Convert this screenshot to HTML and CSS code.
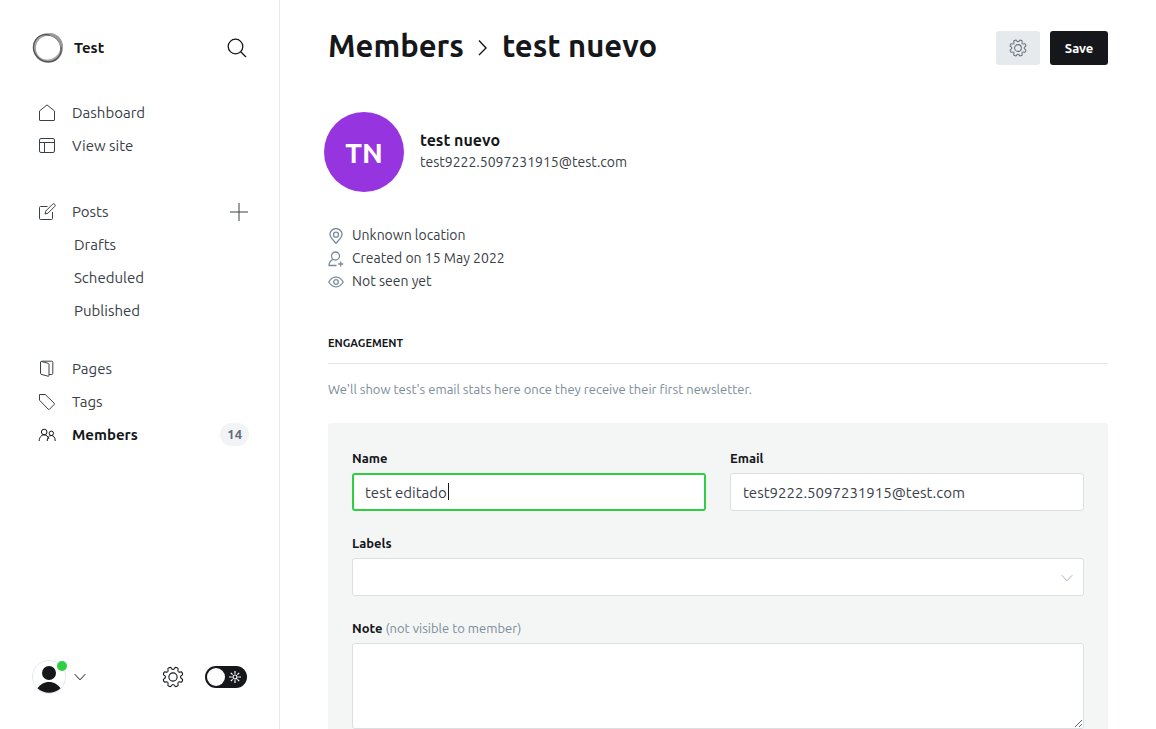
FILE: index.html
```
<!DOCTYPE html>
<html lang="en">
<head>
<meta charset="utf-8">
<meta name="viewport" content="width=device-width, initial-scale=1">
<title>test nuevo - Members</title>
<link rel="stylesheet" href="styles.css">
</head>
<body>
<svg class="defs" aria-hidden="true">
  <path id="tooth" d="M8.860 4.420C9.700 4.070 9.900 3.400 10 2.400Q10.100 1 11.300 1H12.700Q13.900 1 14 2.400C14.100 3.400 14.300 4.070 15.140 4.420"/>
  <symbol id="gear" viewBox="0 0 24 24">
    <circle cx="12" cy="12" r="4.500"/>
    <use href="#tooth" transform="rotate(22.500 12 12)"/>
    <use href="#tooth" transform="rotate(67.500 12 12)"/>
    <use href="#tooth" transform="rotate(112.500 12 12)"/>
    <use href="#tooth" transform="rotate(157.500 12 12)"/>
    <use href="#tooth" transform="rotate(202.500 12 12)"/>
    <use href="#tooth" transform="rotate(247.500 12 12)"/>
    <use href="#tooth" transform="rotate(292.500 12 12)"/>
    <use href="#tooth" transform="rotate(337.500 12 12)"/>
  </symbol>
</svg>
<div class="app">
  <nav class="sidebar">
    <header class="brand">
      <svg class="brand-logo" viewBox="0 0 32 32" aria-hidden="true">
        <circle cx="16" cy="16" r="13.500" stroke="#888" stroke-width="2.600"/>
        <ellipse cx="16.500" cy="15.500" rx="14" ry="12.800" stroke="#aaa" stroke-width="1.800" transform="rotate(-35 16 16)"/>
        <ellipse cx="15.500" cy="16.500" rx="14.200" ry="13.200" stroke="#555" stroke-width="1.300" transform="rotate(35 16 16)"/>
        <path d="M18 2.500c6 .5 11 5 11.500 12" stroke="#999" stroke-width="3"/>
      </svg>
      <span class="brand-name">Test</span>
      <button class="icon-button" type="button" aria-label="Search">
        <svg class="icon-search" viewBox="0 0 20 20"><circle cx="8.500" cy="8.500" r="7.300"/><path d="M13.700 13.700L19 19"/></svg>
      </button>
    </header>
    <div class="nav">
      <ul class="nav-group">
        <li><a class="nav-link" href="#"><svg class="nav-icon" viewBox="0 0 18 18"><path d="M1.500 7L9 .9 16.500 7v9a.5.5 0 0 1-.5.500H2a.5.5 0 0 1-.5-.5z"/></svg>Dashboard</a></li>
        <li><a class="nav-link" href="#"><svg class="nav-icon" viewBox="0 0 18 18"><rect x="1.500" y="1.500" width="15" height="14" rx="1.500"/><path d="M1.500 5.500h15M6.500 5.500v10"/></svg>View site</a></li>
      </ul>
      <ul class="nav-group nav-posts">
        <li class="nav-row"><a class="nav-link" href="#"><svg class="nav-icon" viewBox="0 0 18 18"><path d="M9.500 3.500h-7a1 1 0 0 0-1 1v11a1 1 0 0 0 1 1h11a1 1 0 0 0 1-1V9M7 11l.8-3L14.500 1.300a1.400 1.400 0 0 1 2.200 2.200L10 10.200z"/></svg>Posts</a>
          <button class="icon-button" type="button" aria-label="New post"><svg class="icon-plus" viewBox="0 0 18 18"><path d="M9 0v18M0 9h18"/></svg></button></li>
        <li><a class="nav-link nav-sub" href="#">Drafts</a></li>
        <li><a class="nav-link nav-sub" href="#">Scheduled</a></li>
        <li><a class="nav-link nav-sub" href="#">Published</a></li>
      </ul>
      <ul class="nav-group">
        <li><a class="nav-link" href="#"><svg class="nav-icon" viewBox="0 0 18 18"><path d="M2.500 2v11.500a.8.8 0 0 0 .6.800l6.900 1.900a.8.8 0 0 0 1-.8V4.200a.8.8 0 0 0-.6-.8L3.600 1.500c-.6-.2-1.100 0-1.100.5zM3.500 1.200h10a1.300 1.300 0 0 1 1.300 1.300v11a1 1 0 0 1-1 1H11"/></svg>Pages</a></li>
        <li><a class="nav-link" href="#"><svg class="nav-icon" viewBox="0 0 18 18"><path d="M1.500 1.500h5.700l9 8.700a1 1 0 0 1 0 1.300l-4.700 4.700a1 1 0 0 1-1.300 0l-8.700-9z"/></svg>Tags</a></li>
        <li class="nav-row"><a class="nav-link is-current" href="#"><svg class="nav-icon" viewBox="0 0 18 18"><circle cx="6.200" cy="6" r="2.800"/><circle cx="13.300" cy="7.300" r="2.200"/><path d="M1.200 15c0-3.500 2-6.100 5-6.100 2.400 0 4 1.600 4.700 4M9.200 15c0-3.200 1.700-5.500 4.100-5.500s3.900 1.900 3.900 5.500"/></svg>Members</a>
          <span class="count">14</span></li>
      </ul>
    </div>
    <footer class="account">
      <button class="user-menu" type="button" aria-label="Account menu">
        <span class="user-avatar">
          <svg viewBox="0 0 34 34"><circle class="ring" cx="17" cy="17" r="16.500"/><circle cx="17" cy="13" r="7"/><path d="M5.500 28.300C8 24.500 12 22 17 22s9 2.500 11.500 6.300A17 17 0 0 1 5.500 28.300z"/></svg>
          <span class="user-dot"></span>
        </span>
        <svg class="icon-chevron" viewBox="0 0 12 8"><path d="M.7 1.200L6 6.800l5.300-5.600"/></svg>
      </button>
      <a class="settings" href="#" aria-label="Settings"><svg class="gear-large"><use href="#gear"/></svg></a>
      <label class="switch"><input class="switch-input" type="checkbox" aria-label="Night shift">
        <svg class="icon-sun" viewBox="0 0 12 12"><circle cx="6" cy="6" r="2"/><path d="M6 0v2.800M6 9.200V12M0 6h2.800M9.200 6H12M1.800 1.800l1.800 1.800M8.400 8.400l1.800 1.800M1.800 10.200l1.800-1.800M8.400 3.600l1.800-1.800"/></svg>
      </label>
    </footer>
  </nav>

  <main class="main">
    <header class="page-header">
      <h1 class="title"><a href="#">Members</a><svg class="title-arrow" viewBox="0 0 10 18"><path d="M1 3.500L8 11 1 18"/></svg>test nuevo</h1>
      <div class="actions">
        <button class="button button-settings" type="button" aria-label="Member settings"><svg class="gear-small"><use href="#gear"/></svg></button>
        <button class="button button-save" type="button">Save</button>
      </div>
    </header>

    <section class="member">
      <div class="member-avatar">TN</div>
      <div>
        <h2 class="member-name">test nuevo</h2>
        <p class="member-email">test9222.5097231915@test.com</p>
      </div>
    </section>
    <ul class="facts">
      <li><svg class="fact-icon" viewBox="0 0 16 16"><path d="M8 15.300C4.500 11.500 2 9 2 6.500a6 6 0 0 1 12 0c0 2.500-2.500 5-6 8.800z"/><circle cx="8" cy="6.700" r="2.500"/></svg>Unknown location</li>
      <li><svg class="fact-icon" viewBox="0 0 16 16"><circle cx="7.500" cy="5" r="4"/><path d="M5.200 8.300C2.500 9.200 1.100 11.400 1 14.500h7.500M12.700 10.500v5M10.200 13h5"/></svg>Created on 15 May 2022</li>
      <li><svg class="fact-icon" viewBox="0 0 16 16"><path d="M.8 8C2.500 5 5 3.200 8 3.200s5.500 1.800 7.200 4.800c-1.700 3-4.200 4.800-7.200 4.800S2.500 11 .8 8z"/><circle cx="8" cy="8" r="2.300"/></svg>Not seen yet</li>
    </ul>

    <h3 class="section-title">Engagement</h3>
    <p class="hint">We'll show test's email stats here once they receive their first newsletter.</p>

    <form class="panel">
      <div class="field">
        <label class="label" for="name">Name</label>
        <div class="text-box">
          <input class="control is-active" id="name" type="text" value="test editado" autocomplete="off">
          <span class="caret"></span>
        </div>
      </div>
      <div class="field">
        <label class="label" for="email">Email</label>
        <input class="control" id="email" type="text" value="test9222.5097231915@test.com" autocomplete="off">
      </div>
      <div class="field field-wide">
        <label class="label" for="labels">Labels</label>
        <div class="select">
          <select class="control" id="labels"><option></option></select>
          <svg class="select-arrow" viewBox="0 0 12 8"><path d="M.7 1.200L6 6.800l5.300-5.600"/></svg>
        </div>
      </div>
      <div class="field field-wide">
        <label class="label" for="note">Note <span class="label-extra">(not visible to member)</span></label>
        <textarea class="control note" id="note"></textarea>
      </div>
    </form>
  </main>
</div>
</body>
</html>
```
FILE: styles.css
```
*, *::before, *::after { box-sizing: border-box; }
body {
  margin: 0;
  background: #fff;
  color: #394047;
  font-family: Ubuntu, "Noto Sans", "Open Sans", sans-serif;
  font-size: 14px;
}
h1, h2, h3, p, ul { margin: 0; padding: 0; }
ul { list-style: none; }
a { color: inherit; text-decoration: none; }
button { border: 0; padding: 0; background: none; font: inherit; color: inherit; cursor: pointer; }
svg { display: block; fill: none; stroke: currentColor; flex: none; }
.defs { position: absolute; width: 0; height: 0; }

.app { display: flex; height: 100vh; }

.sidebar {
  display: flex;
  flex-direction: column;
  flex: none;
  width: 280px;
  padding: 32px 31px 32px 32px;
  border-right: 1px solid #e5e7e9;
  font-size: 15px;
}
.brand { display: flex; align-items: center; gap: 10px; padding-right: 1px; color: #15171a; }
.brand-logo { width: 32px; height: 32px; }
.brand-name { flex: 1; font-weight: 700; line-height: 16px; }
.icon-search { width: 20px; height: 20px; stroke-width: 1.3; }
.nav { flex: 1; margin-top: 32px; }
.nav-posts { margin: 33px 0 25px; }
.nav-row { display: flex; align-items: center; justify-content: space-between; }
.nav-link { display: flex; align-items: center; gap: 16px; height: 33px; padding-left: 6px; line-height: 17px; }
.nav-sub { padding-left: 42px; }
.nav-link.is-current { color: #15171a; font-weight: 700; }
.nav-icon { width: 18px; height: 18px; }
.icon-plus { width: 18px; height: 18px; }
.nav .count {
  margin-right: -1px;
  padding: 0 7px;
  border-radius: 12px;
  background: #f1f3f5;
  color: #626d79;
  font-size: 13px;
  font-weight: 600;
  line-height: 23px;
}
.account { display: flex; align-items: center; height: 40px; padding-right: 1px; }
.user-menu { display: flex; align-items: center; gap: 8px; margin-right: auto; color: #15171a; }
.user-avatar { position: relative; width: 34px; height: 34px; }
.user-avatar svg { fill: #15171a; stroke: none; }
.user-avatar .ring { fill: #fff; stroke: #e5e9ed; }
.user-dot { position: absolute; top: 1px; right: -1px; width: 10px; height: 10px; border-radius: 50%; background: #30cf43; }
.icon-chevron { width: 12px; height: 8px; }
.settings { margin-right: 21px; color: #15171a; }
.gear-large { width: 22px; height: 22px; stroke-width: 1.2; }
.switch {
  display: flex;
  align-items: center;
  justify-content: space-between;
  width: 42px;
  height: 22px;
  padding: 0 6px 0 2px;
  border-radius: 11px;
  background: #15171a;
  color: #fff;
}
.switch-input { width: 18px; height: 18px; margin: 0; border-radius: 50%; background: #fff; appearance: none; }
.icon-sun { width: 12px; height: 12px; stroke-width: 1.2; }

.main { flex: 1; min-width: 0; padding: 22px 48px 48px; overflow-y: auto; scrollbar-width: none; }
.page-header { display: flex; align-items: center; justify-content: space-between; height: 50px; }
.title { display: flex; align-items: center; gap: 14px; padding-bottom: 2px; color: #15171a; font-size: 31px; font-weight: 700; line-height: 40px; }
.title-arrow { width: 10px; height: 18px; overflow: visible; stroke-width: 1.4; }
.actions { display: flex; gap: 10px; padding-top: 2px; }
.button { display: flex; align-items: center; justify-content: center; height: 34px; padding: 0 13px; border-radius: 3px; font-size: 13px; }
.button-settings { background: #e6eaed; color: #626d79; }
.gear-small { width: 18px; height: 18px; stroke-width: 1.4; }
.button-save { min-width: 58px; background: #15171a; color: #fff; font-weight: 600; }

.member { display: flex; align-items: center; gap: 16px; margin: 40px 0 32px -4px; }
.member-avatar {
  display: grid;
  place-items: center;
  width: 80px;
  height: 80px;
  border-radius: 50%;
  background: #9635e0;
  color: #fff;
  font-size: 28px;
  font-weight: 600;
}
.member-name { color: #15171a; font-size: 16px; font-weight: 700; line-height: 22px; }
.member-email { padding-bottom: 2px; font-size: 14px; line-height: 22px; }
.facts li { display: flex; align-items: center; gap: 8px; line-height: 23px; }
.fact-icon { width: 16px; height: 16px; color: #7c8b9a; stroke-width: 1.3; }
.section-title {
  margin-top: 40px;
  padding-bottom: 10px;
  border-bottom: 1px solid #e5e7e9;
  color: #15171a;
  font-size: 11px;
  font-weight: 600;
  line-height: 20px;
  text-transform: uppercase;
}
.hint { margin: 15px 0 24px; color: #7c8b9a; font-size: 13px; line-height: 20px; }

.panel {
  display: grid;
  grid-template-columns: 1fr 1fr;
  gap: 22px 24px;
  padding: 25px 24px 24px;
  border-radius: 3px;
  background: #f4f6f6;
}
.field { display: flex; flex-direction: column; gap: 5px; min-width: 0; }
.field-wide { grid-column: 1 / -1; }
.label { color: #15171a; font-size: 13px; font-weight: 600; line-height: 20px; }
.label-extra { color: #7c8b9a; font-weight: 400; }
.control {
  display: block;
  width: 100%;
  height: 38px;
  padding: 0 12px;
  border: 1px solid #dcdfe0;
  border-radius: 3px;
  outline: 0;
  background: #fff;
  color: #394047;
  font: inherit;
  font-size: 15px;
  appearance: none;
}
.control.is-active { padding: 0 11px; border: 2px solid #30cf43; caret-color: transparent; }
.text-box, .select { position: relative; }
.caret { position: absolute; top: 10px; left: 96px; width: 1px; height: 17px; background: #15171a; }
.select-arrow { position: absolute; top: 16px; right: 11px; width: 12px; height: 8px; color: #abb4be; pointer-events: none; }
.note { height: 86px; padding: 8px 12px; resize: vertical; }
```
